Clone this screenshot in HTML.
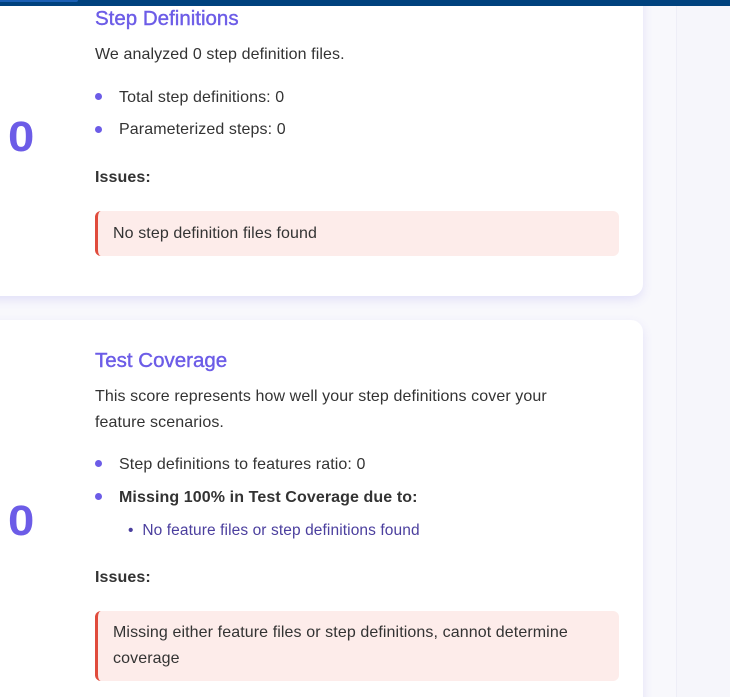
<!DOCTYPE html>
<html><head><style>
*{margin:0;padding:0;box-sizing:border-box}
html,body{width:730px;height:697px;overflow:hidden}
body{background:#f8f8fc;font-family:"Liberation Sans",sans-serif;color:#333;position:relative}
.top{position:absolute;left:0;top:0;width:730px;height:6px;background:#00427e}
.top i{position:absolute;left:0;top:0;width:78px;height:2px;background:#1a5fb4;border-radius:0 0 4px 0}
.right{position:absolute;left:676px;top:6px;width:54px;height:691px;background:#f6f6fb;border-left:1px solid #eeeef7}
.card{position:absolute;left:-20px;width:663px;background:#fff;border-radius:12px;box-shadow:0 4px 10px rgba(108,92,231,.15)}
.t{position:absolute;white-space:nowrap;font-size:16px;line-height:20px;letter-spacing:.1px}
h2{position:absolute;left:95px;font-size:20.5px;font-weight:normal;color:#6c5ce7;white-space:nowrap;-webkit-text-stroke:.4px #6c5ce7}
.score{position:absolute;left:8px;font-size:43px;line-height:50px;font-weight:bold;color:#6c5ce7;transform:scaleX(1.1);transform-origin:left}
.dot{position:absolute;left:95px;width:7px;height:7px;border-radius:50%;background:#6c5ce7}
.alert{position:absolute;left:95px;width:524px;background:#fdecea;border-left:3px solid #e04b3c;border-radius:6px;padding:0 40px 0 15px;font-size:16px;line-height:26px;color:#333;letter-spacing:.1px}
</style></head><body>
<div class="card" style="top:-20px;height:316px"></div>
<div class="card" style="top:320px;height:400px"></div>
<div class="right"></div>
<div class="top"><i></i></div>

<h2 style="top:7px">Step Definitions</h2>
<div class="t" style="left:95px;top:45px">We analyzed 0 step definition files.</div>
<div class="dot" style="top:93px"></div><div class="t" style="left:119px;top:88px">Total step definitions: 0</div>
<div class="dot" style="top:126px"></div><div class="t" style="left:119px;top:120px">Parameterized steps: 0</div>
<div class="score" style="top:112px">0</div>
<div class="t" style="left:95px;top:168px;font-weight:bold">Issues:</div>
<div class="alert" style="top:211px;height:45px;padding-top:10px">No step definition files found</div>

<h2 style="top:349px">Test Coverage</h2>
<div class="t" style="left:95px;line-height:26px;width:490px;white-space:normal;top:384px">This score represents how well your step definitions cover your feature scenarios.</div>
<div class="dot" style="top:460px"></div><div class="t" style="left:119px;top:455px">Step definitions to features ratio: 0</div>
<div class="dot" style="top:493px"></div><div class="t" style="left:119px;top:488px;font-weight:bold">Missing 100% in Test Coverage due to:</div>
<div class="t" style="left:128px;top:521px;color:#4b3f9e;font-size:15.5px">•&nbsp;&nbsp;No feature files or step definitions found</div>
<div class="score" style="top:496px">0</div>
<div class="t" style="left:95px;top:568px;font-weight:bold">Issues:</div>
<div class="alert" style="top:611px;height:70px;padding-top:9px">Missing either feature files or step definitions, cannot determine coverage</div>
</body></html>
